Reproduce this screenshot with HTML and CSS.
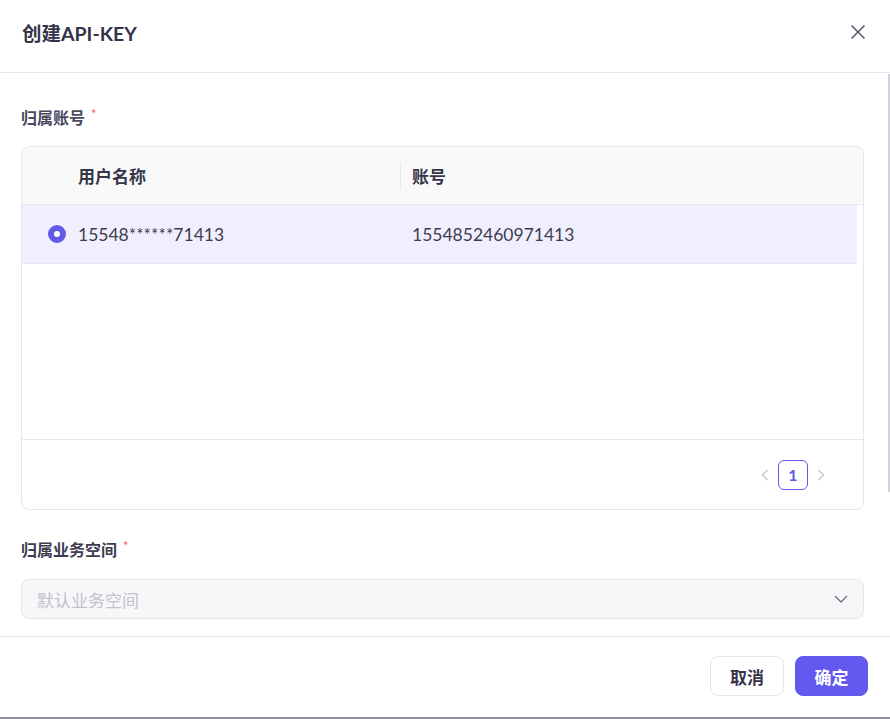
FILE: index.html
```html
<!DOCTYPE html>
<html lang="zh-CN">
<head>
  <meta charset="UTF-8">
  <title>创建API-KEY</title>
  <link rel="stylesheet" href="styles.css">
</head>
<body>
<div class="modal">
  <div class="modal-header">
    <span class="modal-title">创建API-KEY</span>
    <a href="javascript:void(0)" class="close-btn">
      <svg width="16" height="16" viewBox="0 0 16 16"><path d="M1.5 1.5L14.5 14.5M14.5 1.5L1.5 14.5" stroke="#4a4a5e" stroke-width="1.4" fill="none"/></svg>
    </a>
  </div>

  <div class="modal-body">
    <div class="field-label">归属账号<span class="req">*</span></div>
    <div class="table">
      <div class="table-head">
        <div class="cell cell-name">用户名称</div>
        <div class="cell cell-account"><span class="divider"></span>账号</div>
      </div>
      <div class="table-rows">
        <div class="row selected">
          <div class="cell cell-name"><span class="radio"></span>15548******71413</div>
          <div class="cell cell-account">1554852460971413</div>
        </div>
      </div>
      <div class="pager">
        <span class="pager-arrow">
          <svg width="8" height="12" viewBox="0 0 8 12"><path d="M6.5 1L1.5 6L6.5 11" stroke="#c4c4cc" stroke-width="1.3" fill="none"/></svg>
        </span>
        <span class="pager-item active">1</span>
        <span class="pager-arrow">
          <svg width="8" height="12" viewBox="0 0 8 12"><path d="M1.5 1L6.5 6L1.5 11" stroke="#c4c4cc" stroke-width="1.3" fill="none"/></svg>
        </span>
      </div>
    </div>

    <div class="field-label second">归属业务空间<span class="req">*</span></div>
    <div class="select">
      <span class="placeholder">默认业务空间</span>
      <svg width="14" height="8" viewBox="0 0 14 8"><path d="M1 1L7 7L13 1" stroke="#6e6e80" stroke-width="1.3" fill="none"/></svg>
    </div>
  </div>

  <div class="modal-footer">
    <button type="button" class="btn">取消</button>
    <button type="button" class="btn btn-primary">确定</button>
  </div>
  <span class="scroll-thumb"></span>
</div>
</body>
</html>
```

FILE: styles.css
```css
*{
  box-sizing: border-box;
}
body{
  margin: 0;
  padding: 0;
  font-family: Lato, "Noto Sans CJK SC", sans-serif;
  color: #3d3d52;
  background: #fff;
}
.modal{
  position: relative;
  width: 890px;
  height: 719px;
  background: #fff;
  border-bottom: 2px solid #8c8c94;
}
.modal-header{
  height: 73px;
  display: flex;
  align-items: center;
  justify-content: space-between;
  padding: 0 24px 8px 22px;
  border-bottom: 1px solid #e6e6ec;
}
.modal-title{
  font-size: 19.5px;
  font-weight: 700;
  color: #35354a;
}
.close-btn{
  display: flex;
}

.modal-body{
  padding: 35px 26px 0 21px;
}
.field-label{
  font-size: 16px;
  line-height: 20px;
  font-weight: 700;
  color: #4a4a5e;
  margin-bottom: 18px;
}
.field-label.second{
  margin-top: 30px;
  margin-bottom: 19px;
  color: #3d3d52;
}
.req{
  color: #f5626a;
  font-size: 13px;
  font-weight: 400;
  vertical-align: top;
  margin-left: 6px;
  line-height: 12px;
}

.table{
  border: 1px solid #e6e6ec;
  border-radius: 8px;
  overflow: hidden;
}
.table-head{
  display: flex;
  height: 58px;
  background: #f9f9fa;
  border-bottom: 1px solid #e6e6ec;
  font-weight: 700;
  font-size: 17px;
  color: #35354a;
}
.cell{
  display: flex;
  align-items: center;
}
.cell-name{
  width: 378px;
  padding-left: 56px;
}
.cell-account{
  position: relative;
  flex: 1;
  padding-left: 12px;
}
.divider{
  position: absolute;
  left: 0;
  top: 15px;
  width: 1px;
  height: 28px;
  background: #e6e6ec;
}
.table-rows{
  height: 235px;
  padding-right: 6px;
  border-bottom: 1px solid #e6e6ec;
}
.row{
  display: flex;
  height: 59px;
  border-bottom: 1px solid #e6e6ec;
  font-size: 17.5px;
  color: #3d3d52;
}
.row.selected{
  background: #f1effd;
}
.row .cell-name{
  padding-left: 26px;
}
.radio{
  width: 18px;
  height: 18px;
  border-radius: 50%;
  border: 6px solid #6359e9;
  background: #fff;
  margin-right: 12px;
}

.pager{
  height: 69px;
  display: flex;
  align-items: center;
  justify-content: flex-end;
  padding-right: 37px;
  gap: 8px;
}
.pager-arrow{
  display: flex;
  width: 10px;
  justify-content: center;
}
.pager-item{
  width: 30px;
  height: 30px;
  display: flex;
  align-items: center;
  justify-content: center;
  border-radius: 6px;
  font-size: 16px;
  font-weight: 700;
}
.pager-item.active{
  border: 1px solid #6359e9;
  color: #6359e9;
}

.select{
  height: 40px;
  display: flex;
  align-items: center;
  justify-content: space-between;
  padding: 0 15px 0 15px;
  background: #f7f7f9;
  border: 1px solid #e6e6ec;
  border-radius: 8px;
}
.placeholder{
  font-size: 17px;
  color: #c2c2ca;
}

.modal-footer{
  margin-top: 17px;
  border-top: 1px solid #e6e6ec;
  display: flex;
  justify-content: flex-end;
  gap: 11px;
  padding: 19px 22px 0 0;
}
.btn{
  height: 40px;
  width: 74px;
  border: 1px solid #e6e6ec;
  border-radius: 8px;
  background: #fff;
  font-family: Lato, "Noto Sans CJK SC", sans-serif;
  font-size: 17px;
  font-weight: 700;
  color: #35354a;
  cursor: pointer;
}
.btn-primary{
  width: 73px;
  background: #6359ee;
  border-color: #6359ee;
  color: #fff;
}

.scroll-thumb{
  position: absolute;
  right: 0;
  top: 74px;
  width: 2px;
  height: 418px;
  background: #d2d2d8;
}
```
